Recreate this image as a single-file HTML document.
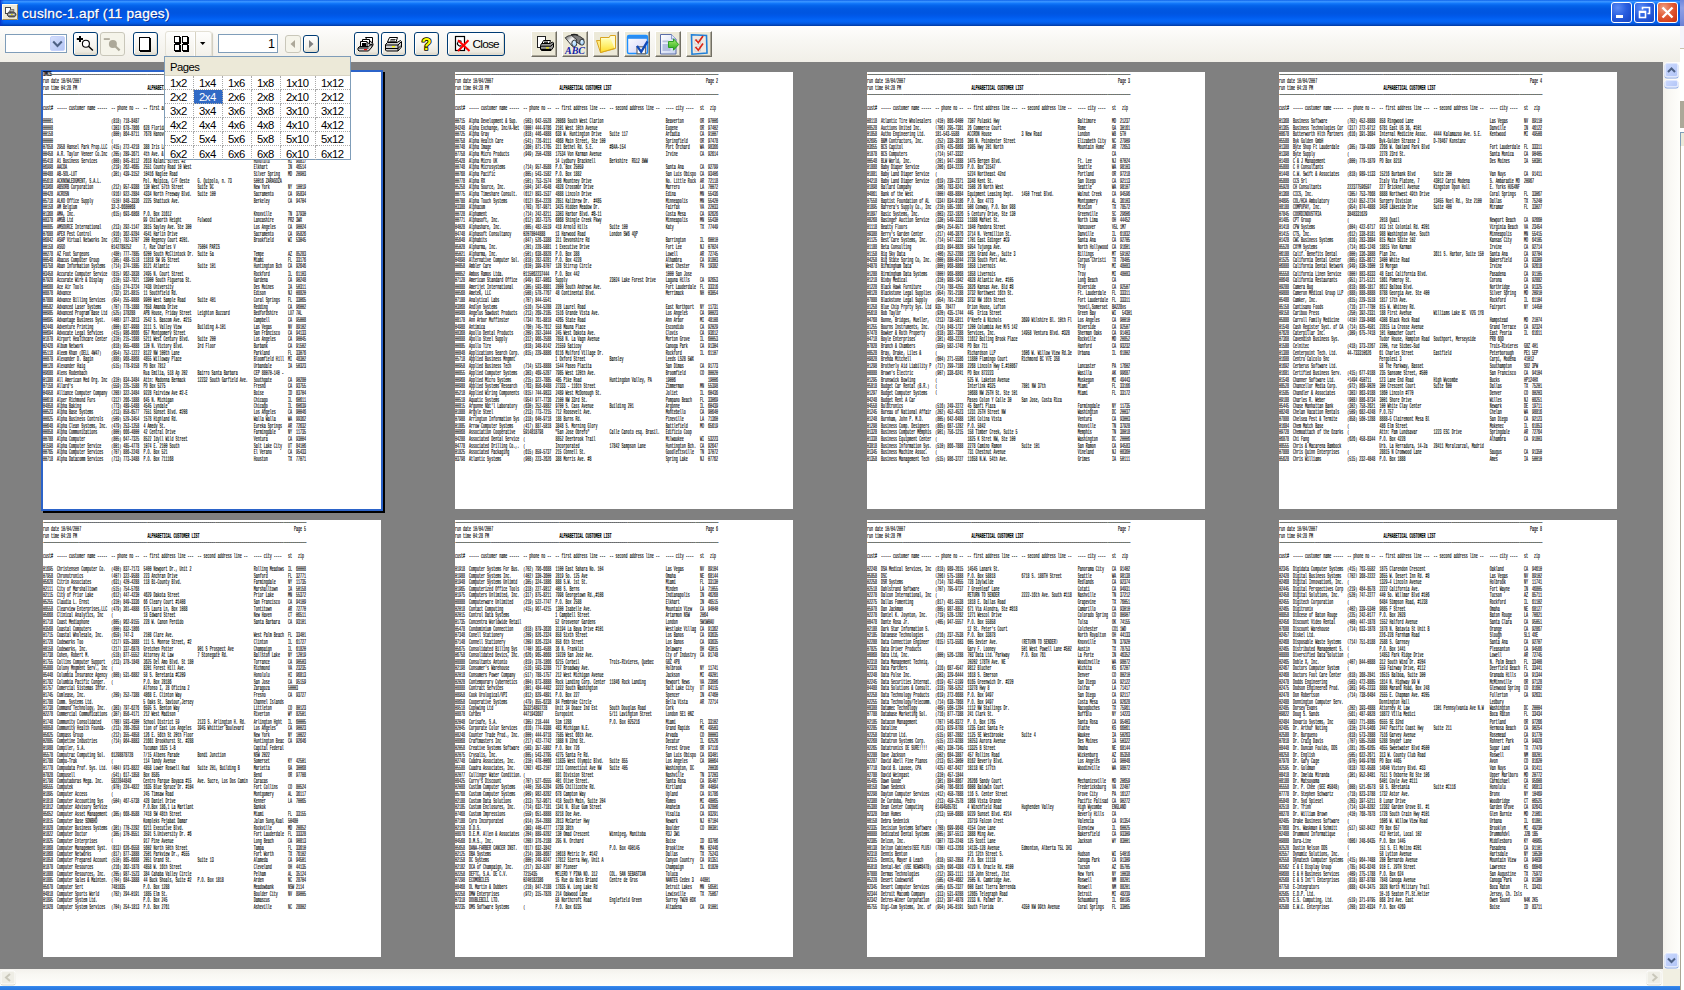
<!DOCTYPE html>
<html><head><meta charset="utf-8"><title>cuslnc-1.apf (11 pages)</title>
<style>
*{box-sizing:border-box;margin:0;padding:0}
html,body{width:1684px;height:990px;overflow:hidden;background:#fff;font-family:"Liberation Sans",sans-serif}
#win{position:absolute;left:0;top:0;width:1680px;height:990px;background:#808080;overflow:hidden}
#title{position:absolute;left:0;top:0;width:1680px;height:26px;
background:linear-gradient(to bottom,#0a5ee8 0%,#3a93ff 5%,#2a8bff 9%,#0f74f8 14%,#0463ea 22%,#0058e2 34%,#0055e0 50%,#0059ea 62%,#0364f6 76%,#0463f2 84%,#0357dd 91%,#0247bd 96%,#0138a0 100%)}
#title:before{content:"";position:absolute;left:0;top:0;width:4px;height:26px;background:linear-gradient(to right,#0a34c8 0,rgba(10,52,200,0.5) 1.5px,rgba(10,52,200,0) 4px)}
#title .ttl{position:absolute;left:22px;top:4.5px;color:#fff;font-size:13.7px;line-height:18px;letter-spacing:0.25px;-webkit-text-stroke:0.3px #fff;text-shadow:1px 1px 0 #0a2a8a;white-space:nowrap}
#tb{position:absolute;left:0;top:26px;width:1680px;height:36px;background:linear-gradient(to bottom,#fefefd 0%,#f8f7f3 40%,#f1efe8 100%)}
#work{position:absolute;left:0;top:62px;width:1663px;height:907px;background:#808080}
.page{position:absolute;width:338px;height:437px;background:#fff;overflow:hidden}
.page pre{position:absolute;left:0.3px;top:0px;font-family:"Liberation Mono",monospace;font-size:10px;line-height:10.36px;color:#000;transform-origin:0 0;transform:scale(0.3345,0.64);white-space:pre;-webkit-text-stroke:0.26px #000}
.page pre b{font-weight:bold}
.page pre i{font-style:normal;display:inline-block;transform:scaleY(0.76);transform-origin:50% 60%}
.page pre u{text-decoration:none;text-shadow:3px 0 0 #000}
.sel{box-shadow:0 0 0 2px #2b63c9,2px 2px 0 2px #000;overflow:visible}

/* toolbar controls */
.xb{position:absolute;border:1px solid #003c74;border-radius:3px;background:linear-gradient(to bottom,#ffffff 0%,#f5f4ef 55%,#eceae0 85%,#d8d3c4 100%);box-shadow:inset 1px 1px 0 #fff, inset -1px -1px 0 #e0dccf}
.xb.dis{border-color:#c9c7ba;background:#f5f4ea;box-shadow:none}
.xb svg{position:absolute;left:0;top:0}
.flat{position:absolute;border:1px solid #e4e1d6;border-radius:3px;background:linear-gradient(to bottom,#fefefd,#f3f1ea);box-shadow:1px 1px 1px #cfcbbd}
.cb{position:absolute;left:531px;top:31px;width:26px;height:26px;background:#ece9d8;border-top:1px solid #fff;border-left:1px solid #fff;border-right:1px solid #716f64;border-bottom:1px solid #716f64;box-shadow:inset -1px -1px 0 #aca899}
.cb svg{position:absolute;left:0;top:0}
#combo{position:absolute;left:5px;top:34px;width:62px;height:19px;border:1px solid #7f9db9;background:#fff}
#combo .dd{position:absolute;right:1px;top:1px;width:15px;height:15px;border-radius:2px;background:linear-gradient(135deg,#d5dffc 0%,#c3d1f8 50%,#b4c5f4 100%);border:1px solid #c5d2fb}
#pgno{position:absolute;left:218px;top:34px;width:60px;height:19px;border:1px solid #7f9db9;background:#fff;font-size:12.6px;line-height:19px;text-align:right;padding-right:2px;color:#000}
/* popup */
#pop{position:absolute;left:164px;top:56px;width:187px;height:104px;border:1px solid #7f9db9;background:#fff}
#pop .hd{position:absolute;left:0;top:0;width:185px;height:19px;background:#ece9d8;border-bottom:1px solid #d8d4c4;font-size:11.3px;letter-spacing:-0.55px;line-height:20px;padding-left:5px;color:#000;overflow:hidden}
#pop table{position:absolute;left:0;top:19px;width:185px;border-collapse:separate;border-spacing:0;table-layout:fixed;font-size:11.3px;letter-spacing:-0.45px;color:#000}
#pop td{height:14px;line-height:12px;padding:1px 0 0 5px;border-right:1px dotted #a9a9a9;border-bottom:1px dotted #a9a9a9;white-space:nowrap;overflow:hidden}
#pop td:last-child{border-right:none}
#pop tr:last-child td{border-bottom:none}
#pop td.hi{background:#316ac5;color:#fff}
/* scrollbars */
#vs{position:absolute;left:1663px;top:62px;width:17px;height:907px;background:linear-gradient(to right,#f3f1ec 0%,#f8f7f3 30%,#fefefb 100%)}
#hs{position:absolute;left:0;top:969px;width:1663px;height:17px;background:linear-gradient(to bottom,#f3f1ec 0%,#f8f7f3 30%,#fefefb 100%)}
#corner{position:absolute;left:1663px;top:969px;width:17px;height:17px;background:#f1efe2}
.sb{position:absolute;width:13px;height:14px;border-radius:2px;background:linear-gradient(135deg,#cad8fd 0%,#bccdfa 60%,#b3c6f7 100%);border:1px solid #dfe7fe;box-shadow:0 0 0 0.5px #fff,0 1px 0 0.5px #86a4e4}
.sbd{position:absolute;width:14px;height:13px;border-radius:2px;background:#eeede5;border:1px solid #f6f5f0;box-shadow:0 0 0 0.5px #fff,0 1px 0 0.5px #d8d5c8}
#bot{position:absolute;left:0;top:986px;width:1680px;height:4px;background:linear-gradient(to bottom,#3d8df0 0%,#2c7ee6 40%,#2a78e0 100%)}
#edge{position:absolute;left:1680px;top:0;width:4px;height:990px;background:#fff}
#edge div{position:absolute;left:0;width:4px}

.tbtn{position:absolute;top:2px;width:21px;height:21px;border:1px solid #fff;border-radius:3px;background:radial-gradient(circle at 30% 25%,#5b8bf5 0%,#2a5fe0 45%,#1d4fd0 75%,#1a48c0 100%)}
.tbtn svg{position:absolute;left:-1px;top:-1px}
.tbtn.cls{background:radial-gradient(circle at 30% 25%,#f0a083 0%,#e2603a 40%,#d6421e 75%,#bf3312 100%)}
.q{position:absolute;left:6px;top:2px;font-size:17px;font-weight:bold;line-height:18px;color:#ff0;-webkit-text-stroke:1.1px #000;paint-order:stroke fill}
.cl{position:absolute;left:24.5px;top:4.6px;font-size:11.8px;line-height:13px;color:#000;letter-spacing:-0.75px}
</style></head><body>
<div id="win">
<div id="work"></div>
<div class="page sel" style="left:43px;top:72px"><pre><u>DMCS-------------------------------------------------------------------------------------------------------------------------------</u>
run date 10/04/2007
run time 04:28 PM                                   <b>ALPHABETICAL CUSTOMER LIST</b>
<u>-----------------------------------------------------------------------------------------------------------------------------------</u>

cust#  ----- customer name -----  -- phone no --  -- first address line ---  -- second address line --   ---- city ----   st   zip

00001                             <i>(</i>818<i>)</i> 718-8487
00008                             <i>(</i>303<i>)</i> 678-7866  628 Florida Avenue                                     Longmont         CO  80501
00158                             <i>(</i>800<i>)</i> 864-8711  7678 Hanover Parkway                                   Greenbelt        MD  20770
00000                             <i>(</i>
07658  2958 Hansel Park Prop.LLC  <i>(</i>415<i>)</i> 272-4218  388 Iris Lane                                          Mill Valley      CA  94941
00458  A.R. Taylor Veneer Co.Inc  <i>(</i>205<i>)</i> 289-3671  4th Ave. &amp; 2nd Street                                  Demopolis        AL  36732
05418  A1 Business Services       <i>(</i>808<i>)</i> 845-8112  2618 Kalani Street #2                                  Honolulu         HI  96817
06998  AACOA                      <i>(</i>219<i>)</i> 262-4685  2551 County Road 10 West                               Elkhart          IN  46514
00488  AB-SOL-LUT                 <i>(</i>301<i>)</i> 439-3152  10416 Naglee Road                                      Silver Spring    MD  20903
05618  ACKNOWLEDGMENT, S.A.L.                     Pol. Malpica, C/F Oeste    G. Quipolo, n. 73           50016 ZARAGOZA
03968  ABSORB Corporation         <i>(</i>212<i>)</i> 957-9388  130 West 57th Street       Suite 9C                    New York         NY  10019
00428  ACROSN                     <i>(</i>916<i>)</i> 922-2884  4334 North Freeway Blvd.   Suite 100                   Sacramento       CA  95834
05718  ALKO Office Supply         <i>(</i>510<i>)</i> 848-3336  2225 Shattuck Ave.                                     Berkeley         CA  94704
00158  AM Belgium                 32-2-6680068
01368  AMA, Inc.                  <i>(</i>615<i>)</i> 693-6868  P.O. Box 31612                                         Knoxville        TN  37930
08378  AMSB Ltd                                   99 Chilworth Height        Fulwood                     Lancashire       PR2 3WX
00885  AMSOURCE International     <i>(</i>213<i>)</i> 292-1147  3815 Sayley Ave. Ste 300                               Los Angeles      CA  90024
07688  APEX Pest Control          <i>(</i>916<i>)</i> 362-9284  4541 Harlin Drive                                      Sacramento       CA  95826
06842  ASAP Virtual Networks Inc  <i>(</i>262<i>)</i> 782-3707  200 Regency Court #201.                                Brookfield       WI  53045
00158  ASGO                       0142789252      7, Rue Charles V           75004 PARIS
00278  AZ Foot Surgeons           <i>(</i>480<i>)</i> 777-7885  6200 South McClintock Dr.  Suite 5a                    Tempe            AZ  85283
00548  Abacus Computer Group      <i>(</i>305<i>)</i> 488-1518  11818 SW 95 Street                                     Miami            FL  33176
03758  Aban Information Systems   <i>(</i>714<i>)</i> 374-1885  8121 Atlantic              Suite 101                   Huntington Bch   CA  92646
03458  Accurate Computer Service  <i>(</i>815<i>)</i> 962-3838  2495 N. Court Street                                   Rockford         IL  61103
07928  Accurate Wire &amp; Display    <i>(</i>310<i>)</i> 532-7821  13900 South Figueroa St.                               Gardena          CA  90248
00688  Ace Air Tools              <i>(</i>515<i>)</i> 274-3724  7438 University                                        Des Moines       IA  50311
08878  Advance                    <i>(</i>732<i>)</i> 321-8815  11 Southfield Rd.                                      Edison           NJ  08820
07888  Advance Billing Services   <i>(</i>954<i>)</i> 255-9888  9900 West Sample Road      Suite 401                   Coral Springs    FL  33065
00582  Advanced Laser Systems     <i>(</i>707<i>)</i> 778-1888  7658 Amanda Drive                                      Redding          CA  96002
00985  Advanced Program Base Ltd  <i>(</i>525<i>)</i> 378288    APB House, Friday Street   Leighton Buzzard            Bedfordshire     LU7 7AL
00695  Advantage Business Syst.   <i>(</i>408<i>)</i> 377-3813  2542 S. Bascom Ave. #215                               Campbell         CA  95008
02448  Adventure Printing         <i>(</i>800<i>)</i> 827-9988  3111 S. Valley View        Building A-101              Las Vegas        NV  89102
00694  Advocate Legal Services    <i>(</i>415<i>)</i> 986-8666  657 Montgomery Street                                  San Francisco    CA  94133
01878  Airport Healthcare Center  <i>(</i>310<i>)</i> 215-1688  5211 West Century Blvd.    Suite 200                   Los Angeles      CA  90045
02428  Album Network              <i>(</i>818<i>)</i> 955-4888  120 N. Victory Blvd.       3rd Floor                   Burbank          CA  91502
05118  Aleem Khan <i>(</i>DELL 4W47<i>)</i>     <i>(</i>954<i>)</i> 752-1222  8122 NW 100th Lane                                     Parkland         FL  33076
00878  Alexander D. Bagin         <i>(</i>888<i>)</i> 968-8868  4855 Willoway Place                                    Bloomfield Hill  MI  48302
00128  Alexander Haig             <i>(</i>515<i>)</i> 778-9158  PO Box 7812                                            Urbandale        IA  50323
09688  Alens Rodenbach                            Rua Emilia, 518 Ap 202     Bairro Santa Barbara        CEP 88070-140 -
01388  All American Med Org. Inc  <i>(</i>310<i>)</i> 834-3484  Attn: Madonna Bermack      12232 South Garfield Ave.   Southgate        CA  90280
07158  Allard&#x27;s                   <i>(</i>559<i>)</i> 225-1588  PO Box 5275                                            Fresno           CA  93755
04958  Alliance Computer Company  <i>(</i>208<i>)</i> 322-3484  9228 Fairview Ave #2-E                                 Boise            ID  83704
00618  Alper Richmond Furs        <i>(</i>312<i>)</i> 266-1888  645 N. Michigan                                        Chicago          IL  60611
04858  Alpha Baking               <i>(</i>773<i>)</i> 489-5488  4545 Lyndale                                           Chicago          IL  60639
00523  Alpha Base Systems         <i>(</i>213<i>)</i> 858-6577  7551 Sunset Blvd. #208                                 Los Angeles      CA  90046
00825  Alpha Business Controls    <i>(</i>509<i>)</i> 529-3454  1578 Highland Rd.                                      Walla Walla      WA  99362
00648  Alpha Clean Systems, Inc.  <i>(</i>479<i>)</i> 253-1258  4 Amedy St.                                            Eureka Springs   AR  72632
00858  Alpha Communications       <i>(</i>800<i>)</i> 666-4800  42 Central Drive                                       Farmingdale      NY  11735
00788  Alpha Computer             <i>(</i>805<i>)</i> 647-7325  8522 Idyll Wild Street                                 Ventura          CA  93004
01598  Alpha Computer Service     <i>(</i>801<i>)</i> 485-4778  1074 E. 2100 South                                     Salt Lake City   UT  84106
00765  Alpha Computer Services    <i>(</i>707<i>)</i> 886-2248  P.O. Box 521                                           El Verano        CA  95433
00718  Alpha Datacomm Services    <i>(</i>713<i>)</i> 773-3488  P.O. Box 711168                                        Houston          TX  77071</pre></div>
<div class="page" style="left:455px;top:72px"><pre><u>-----------------------------------------------------------------------------------------------------------------------------------</u>
run date 10/04/2007                                                                                                          Page 2
run time 04:28 PM                                   <b>ALPHABETICAL CUSTOMER LIST</b>
<u>-----------------------------------------------------------------------------------------------------------------------------------</u>

cust#  ----- customer name -----  -- phone no --  -- first address line ---  -- second address line --   ---- city ----   st   zip

00715  Alpha Development &amp; Sup.   <i>(</i>503<i>)</i> 642-5528  20868 South West Clarion                               Beaverton        OR  97006
04248  Alpha Exchange, Inc/A-Net  <i>(</i>800<i>)</i> 444-9786  2101 West 10th Avenue                                  Eugene           OR  97402
00725  Alpha Gray                 <i>(</i>818<i>)</i> 446-4888  638 W. Huntington Drive    Suite 117                   Arcadia          CA  91007
00758  Alpha Health Care          <i>(</i>541<i>)</i> 726-9111  4868 Main Street, Ste 100                              Springfield      OR  97478
00748  Alpha Image                <i>(</i>360<i>)</i> 871-1765  311 Bethel Rd. S.E.        #B4A-154                    Port Orchard     WA  98366
07758  Alpha Micro Products       <i>(</i>949<i>)</i> 250-4288  17534 Von Karman Avenue                                Irvine           CA  92614
05428  Alpha Micro UK                             14 Lydbury Bracknell       Berkshire  RG12 8WW
00748  Alpha Microsystems         <i>(</i>714<i>)</i> 957-8588  P.O. Box 25059                                         Santa Ana        CA  92799
00768  Alpha Pacific              <i>(</i>805<i>)</i> 543-1582  P.O. Box 1882                                          San Luis Obispo  CA  93406
00778  Alpha RX                   <i>(</i>501<i>)</i> 753-1574  108 Mountney Drive                                     No. Little Rock  AR  72118
05258  Alpha Source, Inc.         <i>(</i>504<i>)</i> 347-4548  4828 Crossmor Drive                                    Marrero          LA  70072
00775  Alpha Timeshare Consult.   <i>(</i>612<i>)</i> 893-1537  4888 Lincoln Drive                                     Edina            MN  55436
00788  Alpha Touch Systems        <i>(</i>612<i>)</i> 854-2228  2851 Kalibrew Dr.  #485                                Minneapolis      MN  55420
03388  Alphacom                   <i>(</i>703<i>)</i> 767-9871  3425 Hidden Meadow Dr.                                 Fairfax          VA  22033
00728  Alphament                  <i>(</i>714<i>)</i> 242-8211  3303 Harbor Blvd. #B-11                                Costa Mesa       CA  92626
00771  Alphasoft, Inc.            <i>(</i>612<i>)</i> 362-7375  6868 Shingle Creek Pkwy                                Minneapolis      MN  55430
04028  Alphashare, Inc.           <i>(</i>805<i>)</i> 482-5519  418 Arnold Hills           Suite 100                   Katy             TX  77449
04748  Alphasoft Consultancy      02078044888     13 Harwood Road            London SW6 4QP
05648  Alphabits                  <i>(</i>847<i>)</i> 526-3388  311 Devonshire Rd                                      Barrington       IL  60010
05028  Alpharma, Inc.             <i>(</i>201<i>)</i> 228-5881  1 Executive Drive                                      Fort Lee         NJ  07024
05021  Alpharma, Inc.             <i>(</i>501<i>)</i> 638-8828  P.O. Box 388                                           Lowell           AR  72745
04898  Alternative Computer Sol.  <i>(</i>818<i>)</i> 282-9281  P.O. Box 4228                                          Alhambra         CA  91803
00858  Ambler Care                <i>(</i>610<i>)</i> 399-8707  128 Stirrup Circle                                     West Chester     PA  19382
00852  Ambos Ramos Ltda.          0115062237444   P.O. Box 442                                           1000 San Jose
07128  American Standard Office   <i>(</i>949<i>)</i> 837-9863  Supply                     23024 Lake Forest Drive     Laguna Hills     CA  92653
00888  Amerijet International     <i>(</i>305<i>)</i> 593-8881  2800 South Andrews Ave.                                Fort Lauderdale  FL  33316
00568  Ametek, LLC                <i>(</i>508<i>)</i> 578-7767  48 Continental Blvd.                                   Merrimack        NH  03054
07188  Analytical Labs            <i>(</i>707<i>)</i> 844-5541
03868  Andlyn Systems             <i>(</i>516<i>)</i> 754-5288  228 Laurel Road                                        East Northport   NY  11731
00988  Angelus Sawdust Products   <i>(</i>213<i>)</i> 269-2185  1516 Grande Vista Ave.                                 Los Angeles      CA  90023
08178  Ann Arbor Muffinster       <i>(</i>734<i>)</i> 761-8818  4265 State Road                                        Ann Arbor        MI  48108
04988  Antimica                   <i>(</i>760<i>)</i> 745-7612  558 Mauna Place                                        Escondido        CA  92029
08368  Apollo Dental Products     <i>(</i>209<i>)</i> 292-3444  245 West Dakota Ave.                                   Clovis           CA  93612
00888  Apollo Steel Supply        <i>(</i>312<i>)</i> 966-2588  7858 N. La Vagn Avenue                                 Morton Grove     IL  60053
00885  Apollo Tire                <i>(</i>818<i>)</i> 348-9142  21559 Saticoy                                          Canoga Park      CA  91304
00848  Applications Search Corp.  <i>(</i>815<i>)</i> 229-8886  6116 Mulford Village Dr.                               Rockford         IL  61107
05718  Applied Business Mngmnt                    1 Oxford Street            Bansley                     Leeds LS28 5WX
00958  Applied Business Tech      <i>(</i>714<i>)</i> 523-8888  1544 Paseo Placita                                     San Dimas        CA  91773
00855  Applied Computer Systems   <i>(</i>303<i>)</i> 469-5287  7985 West 120th Ave.                                   Broomfield       CO  80020
00968  Applied Micro Systems      <i>(</i>215<i>)</i> 322-7885  485 Pike Road              Huntingdon Valley, PA       19006                19006
00988  Applied Systems Research   <i>(</i>763<i>)</i> 856-6488  27333 - 116th Street                                   Zimmerman        MN  55398
05218  Applied Wiring Components  <i>(</i>815<i>)</i> 744-9833  2489 West McDonough St.                                Joliet           IL  60436
00518  Aquatic Systems            <i>(</i>954<i>)</i> 977-7736  2100 NW 33rd St.                                       Pompano Beach    FL  33069
00815  Argonne Nat&#x27;l Laboratory   <i>(</i>630<i>)</i> 252-9882  9700 S. Cass Avenue        Building 201                Argonne          IL  60439
01888  Argyle Steel               <i>(</i>213<i>)</i> 773-7215  712 Roosevelt Ave.                                     Montebello       CA  90640
07988  Arrington Information Sys  <i>(</i>318<i>)</i> 640-9718  188 Burns Rd.                                          Pineville        LA  71360
01885  Arrow Computer Systems     <i>(</i>417<i>)</i> 887-5818  3848 S. Morning Glory                                  Battlefield      MO  65619
00868  Association Cooperative    5914818798      &quot;San Jose Obrero&quot;          Calle Canoto esq. Brasil.   Edificio Coop
04288  Associated Dental Service  <i>(</i>               8852 Deerbrook Trail                                   Milwaukee        WI  53223
04778  Associated Drilling Co.,.  <i>(</i>               Incorporated               17842 Sampson Lane          Huntington Bch.  CA  92647
01825  Associated Packaging       <i>(</i>615<i>)</i> 859-5737  215 Connell St.                                        Goodlettsville   TN  37072
03798  Atlantic Systems           <i>(</i>908<i>)</i> 223-2626  388 Morris Ave. #8                                     Spring Lake      NJ  07762</pre></div>
<div class="page" style="left:867px;top:72px"><pre><u>-----------------------------------------------------------------------------------------------------------------------------------</u>
run date 10/04/2007                                                                                                          Page 3
run time 04:28 PM                                   <b>ALPHABETICAL CUSTOMER LIST</b>
<u>-----------------------------------------------------------------------------------------------------------------------------------</u>

cust#  ----- customer name -----  -- phone no --  -- first address line ---  -- second address line --   ---- city ----   st   zip

08118  Atlantic Tire Wholesalers  <i>(</i>410<i>)</i> 866-6400  7307 Pulaski Hwy                                       Baltimore        MD  21237
08528  Auctions United Inc.       <i>(</i>706<i>)</i> 295-7381  26 Commerce Court                                      Rome             GA  30161
01858  Autho Engineering Ltd.     181-543-5588    ACCRON House               3 New Road                  London           W8  5TH
02695  B&amp;M Contractors, Inc.      <i>(</i>252<i>)</i> 338-3816  308 N. Poindexter Street                               Elizabeth City   NC  27909
03655  BCS Capitol                <i>(</i>870<i>)</i> 425-6868  1985 Hwy 201 North                                     Mountain Home    AR  72653
01878  BCS Computers              <i>(</i>714<i>)</i> 547-3332                                                                          CA
00548  BLW World, Inc.            <i>(</i>201<i>)</i> 947-1888  1475 Bergen Blvd.                                      Ft. Lee          NJ  07024
01888  Baby Diaper Service        <i>(</i>206<i>)</i> 634-2229  P.O. Box 31547                                         Seattle          WA  98103
01881  Baby Land Diaper Service   <i>(</i>               5224 Northeast 42nd                                    Portland         OR  97218
04218  Baby Land Diaper Service   <i>(</i>619<i>)</i> 239-2371  3348 Kent St.                                          San Diego        CA  92113
01898  Ballard Company            <i>(</i>206<i>)</i> 783-8241  1508 26 North West                                     Seattle          WA  98107
04861  Bank of the West           <i>(</i>800<i>)</i> 488-8884  Equipment Leasing Dept.    1450 Treat Blvd.            Walnut Creek     CA  94596
07558  Baptist Foundation of AL   <i>(</i>334<i>)</i> 834-9186  P.O. Box 4773                                          Montgomery       AL  36103
01895  Barrera&#x27;s Supply Co., Inc  <i>(</i>210<i>)</i> 585-1661  508 Conway, P.O. Box 988                               Mission          TX  78572
01897  Basic Systems, Inc.        <i>(</i>803<i>)</i> 232-1826  5 Century Drive, Ste 130                               Greenville       SC  29606
08268  Basinger Auction Service   <i>(</i>330<i>)</i> 549-3333  11888 Market St.                                       North Lima       OH  44452
01118  Beatty Floors              <i>(</i>604<i>)</i> 254-9571  1840 Pandora Street                                    Vancouver        V5L 1M7
09388  Berry&#x27;s Garden Center      <i>(</i>217<i>)</i> 446-3876  3714 N. Vermillion St.                                 Danville         IL  61832
01125  Best Care Systems, Inc.    <i>(</i>714<i>)</i> 547-3332  1701 East Edinger #C9                                  Santa Ana        CA  92705
01188  Beta Consulting            <i>(</i>818<i>)</i> 894-8828  5954 Tujunga Ave.                                      North Hollywood  CA  91601
01158  Big Sky Data               <i>(</i>406<i>)</i> 252-2288  1201 Grand Ave., Suite 3                               Billings         MT  59102
04258  Big State Spring Co, Inc.  <i>(</i>800<i>)</i> 880-0244  2738 South Port Ave.                                   Corpus Christi   TX  78405
04878  Birmingham Data            <i>(</i>800<i>)</i> 968-8868  1858 Livernois                                         Troy             MI  48083
01288  Birmingham Data Systems    <i>(</i>800<i>)</i> 968-8868  1858 Livernois                                         Troy             MI  48083
01218  Bixby Medical              <i>(</i>310<i>)</i> 988-1942  4828 Atlantic Ave. #105                                Long Beach       CA
01228  Black Hawk Furniture       <i>(</i>714<i>)</i> 788-4255  3826 Kansas Ave. Bld #8                                Riverside        CA  92507
08128  Blackstone Legal Supplies  <i>(</i>954<i>)</i> 791-2188  3732 Northwest 16th St.                                Ft. Lauderdale   FL  33311
07888  Blackstone Legal Supply    <i>(</i>954<i>)</i> 791-2188  3732 NW 16th Street                                    Fort Lauderdale  FL  33311
01258  Blue Chip Prprty Sys. Ltd  935  78477      Orion House, Lufton                                    Yeovil,Somerset  BA228xs
05618  Bob Taylor                 <i>(</i>920<i>)</i> 435-1744  445  Erica Street                                      Green Bay        WI   54301
04768  Bonne, Bridges, Mueller,   <i>(</i>213<i>)</i> 738-5811  O&#x27;Keefe &amp; Nichols          3699 Wilshire Bl. 10th Fl   Los Angeles      CA  90010
01255  Bourns Instruments, Inc.   <i>(</i>714<i>)</i> 848-1737  1200 Columbia Ave M/S 142                              Riverside        CA  92507
07478  Bowker &amp; Roth Property     <i>(</i>818<i>)</i> 382-7388  Services, Inc.             14958 Ventura Blvd. #328    Sherman Oaks     CA  91403
04718  Boyle Enterprises          <i>(</i>301<i>)</i> 468-2228  11612 Boiling Brook Place                              Rockville        MD  20852
07828  Branch &amp; Chambers          <i>(</i>559<i>)</i> 582-1748  PO Box 711                                             Hanford          CA  93232
08528  Bray, Drake, Liles &amp;       <i>(</i>               Richardson LLP             1606 W. Willow View Rd.3e   Urbana           IL  61802
09828  Brenda Mitchell            <i>(</i>604<i>)</i> 271-5586  11880 Flamingo Court       Richmond BC V7E 3S8
01298  Brotherly Aid Liability P  <i>(</i>717<i>)</i> 299-7188  2268 Lincoln Hwy E.#10867                              Lancaster        PA  17602
08888  Brown&#x27;s Electric           <i>(</i>907<i>)</i> 338-6241  PO Box 872223                                          Wasilla          AK  99687
01295  Brunswick Bowling          <i>(</i>               525 W. Laketon Avenue                                  Muskegon         MI  49443
05818  Budget Car Rental <i>(</i>B.R.<i>)</i>   <i>(</i>               Interlink #325             7801 NW 37th                Miami            FL  33166
01297  Budget Computer Systems    <i>(</i>               10688 NW 25TH St. Ste 101                              Miami            FL  33172
04248  Budget Rent A Car                          Paseo Colon Y Calle 30     San Jose, Costa Rica
04558  Bulbtronics                <i>(</i>516<i>)</i> 249-2272  45 Banfi Plaza                                         Farmingdale      NY  11735
01245  Bureau of National Affair  <i>(</i>202<i>)</i> 452-4523  1231 25TH Street NW                                    Washington       DC  20037
01248  Burnham, John P. M.D.      <i>(</i>805<i>)</i> 642-6488  1201 Colina Vista                                      Ventura          CA  93003
01298  Business Comp. Designers   <i>(</i>865<i>)</i> 687-1282  P.O. 5842                                              Knoxville        TN  37928
01328  Business Computer Memphis  <i>(</i>901<i>)</i> 756-1215  158 Timber Creek, Suite 5                              Memphis          TN  38018
01338  Business Equipment Center  <i>(</i>               1825 K Stret NW, Ste 100                               Washington       DC  20006
03818  Business Information Sys.  <i>(</i>510<i>)</i> 866-7888  2278 Camino Ramon          Suite 101                   San Ramon        CA  94583
01345  Business Machine Assoc.    <i>(</i>               731 Chestnut Avenue                                    Vineland         NJ  08360
01358  Business Management Tech   <i>(</i>515<i>)</i> 986-3727  11658 N.W. 54th Ave.                                   Grimes           IA  50111</pre></div>
<div class="page" style="left:1279px;top:72px"><pre><u>-----------------------------------------------------------------------------------------------------------------------------------</u>
run date 10/04/2007                                                                                                          Page 4
run time 04:28 PM                                   <b>ALPHABETICAL CUSTOMER LIST</b>
<u>-----------------------------------------------------------------------------------------------------------------------------------</u>

cust#  ----- customer name -----  -- phone no --  -- first address line ---  -- second address line --   ---- city ----   st   zip

01368  Business Software          <i>(</i>702<i>)</i> 452-8888  858 Ringwood Lane                                      Las Vegas        NV  89110
01365  Business Technologies Cor  <i>(</i>317<i>)</i> 272-9712  6781 East US 36, #101                                  Danville         IN  46122
08678  Butterworth Hlth Partners  <i>(</i>616<i>)</i> 391-3684  Internal Medicine Assoc.   4444 Kalamazoo Ave. S.E.    Kentwood         MI  49508
05588  Byk Gulden GmbH                            Byk-Gulden Strasse 2       D-78467 Konstanz
01388  Byte Shop Ft Lauderdale    <i>(</i>305<i>)</i> 739-9369  2268 W. Oakland Park Blvd                              Fort Lauderdale  FL  33311
01398  Byte Supply                <i>(</i>               2278 23rd St.                                          Santa Monica     CA  90405
01488  C &amp; J Management           <i>(</i>800<i>)</i> 779-1879  PO Box 8218                                            Des Moines       IA  50301
05888  C H Consultants
01448  C.W. Swift &amp; Associates    <i>(</i>818<i>)</i> 989-1133  15216 Burbank Blvd         Suite 300                   Van Nuys         CA  91411
05888  CCS Srl                                    Italy Via Platone, 7       43012 Carpi Modena          S. Ambaradie MO  20967
05928  CH Consultants             222377596597    227 Bricknell Avenue       Kingston Upon Hull          E. Yorks HU54NF
01368  CICS, Inc.                 <i>(</i>305<i>)</i> 753-7668  8888 Northwest 49th Drive                              Coral Springs    FL  33067
04895  COL/HCA Ambulatory         <i>(</i>214<i>)</i> 852-2724  Surgery Division           13455 Noel Rd., Ste 2100    Dallas           TX  75240
08188  COMPUPAY, Inc.             <i>(</i>954<i>)</i> 874-4888  3450 Lakeside Drive        Suite 400                   Miramar          FL  33027
07845  COORDINDUSTRIA             3848331629
01485  CPT Group                  <i>(</i>               2018 Quail                                             Newport Beach    CA  92660
01418  CPW Systems                <i>(</i>804<i>)</i> 422-6717  913 1st Colonial Rd. #201                              Virginia Beach   VA  23454
01415  CTS, Inc.                  <i>(</i>612<i>)</i> 338-8181  988 Washington Ave. South                              Minneapolis      MN  55415
01428  CWC Business Systems       <i>(</i>816<i>)</i> 283-3684  815 Main Suite 102                                     Kansas City      MO  64105
05528  CXYM Systems               <i>(</i>714<i>)</i> 863-1248  18815 Von Karman                                       Irvine           CA  92714
06188  Calif. Benefits Dental     <i>(</i>800<i>)</i> 336-3888  Plan Inc.                  3611 S. Harbor, Suite 150   Santa Ana        CA  92704
01525  California Dental Center   <i>(</i>805<i>)</i> 835-8672  3400 White Road                                        Bakersfield      CA  93309
06888  California Dental Network  <i>(</i>949<i>)</i> 830-1600  18 Morgan                                              Irvine           CA  92618
05558  California Linen Service   <i>(</i>800<i>)</i> 883-8333  48 East California Blvd.                               Pasadena         CA  91105
08648  California Restaurants     <i>(</i>951<i>)</i> 371-5121  1861 Pomeroy St.                                       Corona           CA  92882
09288  Camera Bug                 <i>(</i>818<i>)</i> 886-1817  8612 Balboa Blvd.                                      Northridge       CA  91325
09888  Cameron Medical Group LLP  <i>(</i>888<i>)</i> 888-8888  8788 Georgia Ave. Ste 400                              Silver Spring    MD  20910
05488  Camker, Inc.               <i>(</i>815<i>)</i> 229-1518  1817 17th Ave.                                         Rockford         IL  61104
05158  Cantisano Foods            <i>(</i>716<i>)</i> 377-7780  815 W. Whitney Rd.                                     Fairport         NY  14450
09158  Cariboo Press              <i>(</i>250<i>)</i> 392-2331  188 First Avenue           Williams Lake BC  V2G 1Y8
05888  Carroll Family Medicine    <i>(</i>410<i>)</i> 239-8486  4308 Black Rock Road                                   Hampstead        MD  21074
01548  Cash Register Syst. of CA  <i>(</i>714<i>)</i> 825-4581  22815 La Crosse Avenue                                 Grand Terrace    CA  92324
07628  Caterpillar Inc.           <i>(</i>309<i>)</i> 675-7418  101 Hamacher Court                                     East Peoria      IL  61611
07368  Cavendish Business Sys.                    Tudor House, Hampton Road  Southport, Merseyside       PR8 6QD
01588  Celnitec                   <i>(</i>418<i>)</i> 373-2267  2200, rue Sicbec-Sud                                   Trois-Rivieres   G8Z 4H1
01388  Centerpoint Tech. Ltd.     44-733310626    61 Charles Street          Eastfield                   Peterborough     PE1 5EP
01688  Centro Calcolo Snc                         Pergolesi 3                                            Carpi, Modena    41012
01692  Cerberus Software Ltd.                     58 The Parkway, Basset                                 Southampton      SO2 3PW
01681  Certified Business Serv.   <i>(</i>415<i>)</i> 677-9188  235 Sansome Street, #500                               San Francisco    CA  94104
01548  Channer Software Ltd.      +1494 450711    123 Lane End Road          High Wycombe                Bucks            HP124HX
08528  Chancellor Media Corp.     <i>(</i>972<i>)</i> 869-9020  300 Crescent Court         Suite 600                   Dallas           TX  75201
01585  Chandler &amp; Associates      <i>(</i>303<i>)</i> 863-9188  1860 Lincoln #770                                      Denver           CO  80203
09188  Charles R. Weber           <i>(</i>908<i>)</i> 886-8734  3001 Shore Drive                                       Willes           NJ  08251
05445  Chase Manhattan Bank       <i>(</i>302<i>)</i> 758-2621  100 White Clay Center                                  Newark           DE  19711
08248  Chelan Vacation Rentals    <i>(</i>509<i>)</i> 682-4248  P.O.757                                                Chelan           WA  98816
07888  Chelsea Pest &amp; Termite     <i>(</i>858<i>)</i> 560-1288  8888-G Clairemont Mesa Bl                              San Diego        CA  92123
01684  Chem Match Base            <i>(</i>               486 Elm Street                                         Mokenec          IL  61853
09728  Chemoattach of the Ozarks  <i>(</i>               Attn: Pam Lundsavar        1223 ESC Drive              Springdale       AR  72764
06878  Chi Fang                   <i>(</i>626<i>)</i> 458-8344  P.O. Box 4228                                          Alhambra         CA  91803
08555  Chris &amp; Macarena Bambock                   Urb. La Herradura, 14-2a   28411 Moralzarzal, Madrid
07888  Chris Quinn Enterprises    <i>(</i>               28815 N Cromwood Lane                                  Saugus           CA  91350
05628  Chris Williams             <i>(</i>515<i>)</i> 232-4848  P.O. Box 1888                                          Ames             IA  50010</pre></div>
<div class="page" style="left:43px;top:520px"><pre><u>-----------------------------------------------------------------------------------------------------------------------------------</u>
run date 10/04/2007                                                                                                          Page 5
run time 04:28 PM                                   <b>ALPHABETICAL CUSTOMER LIST</b>
<u>-----------------------------------------------------------------------------------------------------------------------------------</u>

cust#  ----- customer name -----  -- phone no --  -- first address line ---  -- second address line --   ---- city ----   st   zip

01695  Christensen Computer Co.   <i>(</i>480<i>)</i> 837-7173  5400 Newport Dr., Unit 2                               Rolling Meadows  IL  60008
07958  Chronotronics              <i>(</i>407<i>)</i> 322-9588  223 Anchran Drive                                      Sanford          FL  32771
05628  Citrin Associates          <i>(</i>631<i>)</i> 420-4288  118 Bi-County Blvd.                                    Farmingdale      NY  11735
02111  City of Marshalltown       <i>(</i>515<i>)</i> 754-5768                                                         Marshalltown     IA  50158
02115  City of Prior Lake         <i>(</i>612<i>)</i> 447-4230  4629 Dakota Street                                     Prior Lake       MN  55372
05255  Claudia L. Ernst           <i>(</i>310<i>)</i> 849-3336  66 Cleary Court #1408                                  San Francisco    CA  94109
08558  Clearview Enterprises,LLC  <i>(</i>479<i>)</i> 361-4888  675 Laura Ln, Box 1088                                 Tontitown        AR  72770
05668  Clinical Analytics, Inc    <i>(</i>               18 Edward Street                                       New Haven        CT  06511
01718  Coast Mediaphone           <i>(</i>805<i>)</i> 962-9155  228 W. Canon Perdido                                   Santa Barbara    CA  93101
03568  Coastal Computers          <i>(</i>800<i>)</i> 832-1866
01715  Coastal Wholesale, Inc.    <i>(</i>659<i>)</i> 747-3     2108 Clare Ave.                                        West Palm Beach  FL  33401
01728  Codeworks Too              <i>(</i>217<i>)</i> 935-3888  111 S. Monroe Street, #2                               Clinton          IL  61727
08158  Codeworks, Inc.            <i>(</i>217<i>)</i> 337-6878  Gretchen Potter            901 S Prospect Ave          Champaign        IL  61820
01738  Cohen, Robert M.           <i>(</i>518<i>)</i> 877-5552  Attorney At Law            7 Stonegate Rd.             Ballston Lake    NY  12019
01755  Collins Computer Support   <i>(</i>213<i>)</i> 378-1848  3625 Del Amo Blvd. St 180                              Torrance         CA  90503
05888  Colony Mngment Serv., Inc  <i>(</i>               8201 Forest Hill Ave.                                  Richmond         VA  23235
05448  Columbia Insurance Agency  <i>(</i>808<i>)</i> 531-6882  58 S. Beretania #C209                                  Honolulu         HI  96813
01782  Columbia Pacific Conger.   <i>(</i>               P.O. Box 28186                                         San Jose         CA  95159
01757  Comercial Sistemas Infor.                  Alfonso I, 28 Oficina 2                                Zaragoza         50003
01745  Comlease, Inc.             <i>(</i>209<i>)</i> 252-7388  4868 E. Clinton Way                                    Fresno           CA  93727
01788  Comm. Systems Ltd.                         5 Oaks St. Saviour,Jersey                              Channel Islands
01738  Command Technology, Inc.   <i>(</i>303<i>)</i> 797-6276  6595 S. Benton Way                                     Littleton        CO  80123
02278  Commercial Communications  <i>(</i>307<i>)</i> 856-4171  212 West Madison                                       Riverton         WY  82501
01748  Community Consolidated     <i>(</i>708<i>)</i> 593-4300  School District 59         2123 S. Arlington H. Rd.    Arlington Hght   IL  60005
08858  Community Health Founda-   <i>(</i>213<i>)</i> 266-2658  tion of East Los Angeles   3945 Whittier Boulevard     Los Angeles      CA  90023
05625  Compass Group              <i>(</i>212<i>)</i> 355-4858  126 E. 56th St 20th Floor                              New York         NY  10022
02885  Competine Industries       <i>(</i>714<i>)</i> 964-8883  21661 Brookhurst St. #288                              Huntington Beac  CA  92646
01988  Compiler, S.A.                             Tucuman 1625 1-B                                       Capital Federal
05578  Computrac Computing Sol.   61298878728     7/15 Albens Parade         Bondi Junction              NSW 2022
01788  Compu-Trak                 <i>(</i>               114 Tandy Avenue                                       Somerset         KY  42501
01778  Compudata Prof. Sys. Ltd.  <i>(</i>404<i>)</i> 973-8822  4858 Lower Roswell Road    Suite 201, Building B       Marietta         GA  30068
07828  Compusell                  <i>(</i>541<i>)</i> 617-1858  Box 8585                                               Bend             OR  97708
01798  Computadoras Mega. Inc.    5822844848      Centro Parque Boyaca #15   Ave. Sucre, Los Dos Camin   Caracas
09555  Computek                   <i>(</i>970<i>)</i> 224-4822  1635 Blue Spruce Dr. #104                              Fort Collins     CO  80524
01895  Computer Access            <i>(</i>               245 Timsaw Road                                        Montgomery       AL  36117
01818  Computer Accounting Sys    <i>(</i>504<i>)</i> 467-5738  428 Daniel Drive                                       Kenner           LA  70065
01812  Computer Advisory Service                  P.O.Box 186,1 La Martlant                              Bankok
05652  Computer Asset Management  <i>(</i>305<i>)</i> 668-8588  7418 SW 48th Street                                    Miami            FL  33155
01815  Computer Base SDNBHD                       Kompleks Pejabat Damar                                 Jalan Sung,Kual  50480
01828  Computer Business Systems  <i>(</i>301<i>)</i> 770-2292  6211 Executive Blvd.                                   Rockville        MD  20852
01822  Computer Doctor            <i>(</i>305<i>)</i> 370-8551  3591 S.University Dr. #6                               Fort Lauderdale  FL  33328
01825  Computer Enterprises       <i>(</i>               917 Pine Avenue                                        Long Beach       CA  90813
01868  Computer Management Syst.  <i>(</i>813<i>)</i> 626-6558  5602 North 50th Street                                 Tampa            FL  33610
01868  Computer Networks          <i>(</i>817<i>)</i> 877-3888  2501 Parkview Dr., #555                                Fort Worth       TX  76102
01858  Computer Prepared Account  <i>(</i>510<i>)</i> 865-6688  2051 Grand St.             Suite 13                    Alameda          CA  94501
01878  Computer Resources         <i>(</i>216<i>)</i> 362-1878  4858 W. 16th Street                                    Cleveland        OH  44135
01888  Computer Resources, Inc.   <i>(</i>205<i>)</i> 987-1523  384 Cahaba Valley Circle                               Pelham           AL  35124
01885  Computer Sales &amp; Mainten.  <i>(</i>704<i>)</i> 684-3888  44 Buck Shoals, Suite #2   P.O. Box 1818               Arden            NC  28704
05678  Computer Sert              7481835         P.O. Box 1288                                          Meadowbank       NSW 2114
04818  Computer Sports World      <i>(</i>702<i>)</i> 294-0191  1885 Elm St.                                           Boulder City     NV  89005
01895  Computer System Ltd.                       P.O. Box 245                                           Damascus
01928  Computer System Services   <i>(</i>704<i>)</i> 254-1813  P.O. Box 2761                                          Asheville        NC  28802</pre></div>
<div class="page" style="left:455px;top:520px"><pre><u>-----------------------------------------------------------------------------------------------------------------------------------</u>
run date 10/04/2007                                                                                                          Page 6
run time 04:28 PM                                   <b>ALPHABETICAL CUSTOMER LIST</b>
<u>-----------------------------------------------------------------------------------------------------------------------------------</u>

cust#  ----- customer name -----  -- phone no --  -- first address line ---  -- second address line --   ---- city ----   st   zip

01918  Computer Systems For Bus.  <i>(</i>702<i>)</i> 796-6688  1100 East Sahara No. 104                               Las Vegas        NV  89104
01988  Computer Systems Inc.      <i>(</i>402<i>)</i> 330-3600  2819 So. 125 Ave                                       Omaha            NE  68144
01948  Computer Systems Unlimtd   <i>(</i>305<i>)</i> 324-1886  888 S.W. 1st St.                                       Miami            FL  33130
01965  Computerized Office Tools  <i>(</i>318<i>)</i> 227-9812  408 S. Berns                                           Minden           LA  71055
01975  Computers Unlimited, Inc.  <i>(</i>317<i>)</i> 875-8211  7998 Georgetown Rd.,#108                               Indianapolis     IN  46268
08888  Computerware Unlimited     <i>(</i>219<i>)</i> 522-7747  P.O. Box 2588                                          Elkhart          IN  46515
02018  Contact Computing          <i>(</i>415<i>)</i> 967-4215  1300 Isabelle Ave.                                     Mountain View    CA  94040
02015  Control Data Systems                       1 Campbell Street                                      Artarmon NSW     2064
01735  Concentra Worldwide Retail                 52 Grosvenor Gardens                                   London           SW1W0AU
05478  Condominium Connection     <i>(</i>818<i>)</i> 879-3636  31194 La Baya Drive #101                               Westlake Villag  CA  91362
07348  Conell Stationery          <i>(</i>209<i>)</i> 826-2324  858 Sixth Street                                       Los Banos        CA  93635
07148  Connell Stationery         <i>(</i>209<i>)</i> 826-2324  858 6th Street                                         Los Banos        CA  93635
05675  Consolidated Billing Sys   <i>(</i>740<i>)</i> 363-4588  36 N. Franklin                                         Delaware         OH  43015
06758  Consolidated Devics, Inc.  <i>(</i>626<i>)</i> 965-8668  19220 San Jose Ave.                                    Cty of Industry  CA  91748
08888  Consultants Antonio        <i>(</i>819<i>)</i> 378-1866  6215 Corbeil               Trois-Rivieres, Quebec      G8Z 4P8
02198  Consumer&#x27;s Warehouse       <i>(</i>516<i>)</i> 593-3288  717 Broadway Ave.                                      Holbrook         NY  11741
02018  Consumers Power Company    <i>(</i>517<i>)</i> 788-1757  212 West Michigan Avenue                               Jackson          MI  49201
02028  Contemporary Cybernetics   <i>(</i>804<i>)</i> 873-8888  Rock Landing Corp. Center  11846 Rock Landing          Newport News     VA  23606
08888  Contract Services          <i>(</i>801<i>)</i> 484-4482  3222 South Washington                                  Salt Lake City   UT  84115
08958  Cook Urological/VPI        <i>(</i>812<i>)</i> 829-4891  P.O. Box 227                                           Spencer          IN  47460
08658  Cooperative Systems        <i>(</i>479<i>)</i> 855-6238  84 Pembroke Circle                                     Bella Vista      AR  72714
09518  Copywing Ltd               353214892728    Unit 34 Doace Ind Est      South Douglas Road          Cork
08878  Cordex                     4471943687      Europoint                  5/11 Lavington Street       London SE1 0NZ
02048  Corisafe, S.A.             <i>(</i>305<i>)</i> 218-444   Sim 1288                   P.O. Box 025216             Miami            FL  33102
02045  Corporate Color Services   <i>(</i>616<i>)</i> 774-9388  483 Michigan N.E.                                      Grand Rapids     MI  49503
08248  Counter Trade Prod., Inc.  <i>(</i>800<i>)</i> 444-9718  7585 West 66th Ave.                                    Arvada           CO  80003
08868  Craftmasters Inc           <i>(</i>217<i>)</i> 422-7742  1888 N 22nd St.                                        Decatur          IL  62526
02058  Creative Systems Software  <i>(</i>503<i>)</i> 357-5882  P.O. Box 726                                           Forest Grove     OR  97116
02075  Crysalis, Inc.             <i>(</i>805<i>)</i> 543-2795  4275 Santa Fe Rd.                                      San Luis Obispo  CA  93401
02748  Cuadra Associates, Inc.    <i>(</i>310<i>)</i> 478-0066  11835 West Olympic Blvd.   Suite 855                   Los Angeles      CA  90064
05588  Cuadra Associates, Inc.    <i>(</i>202<i>)</i> 463-2107  1211 Connecticut Ave NW    Suite 405                   Washington, DC       20036
02077  Cullinger Water Condition. <i>(</i>               881 Division Street                                    Nashville        TN  37203
08425  Curry&#x27;s Discount           <i>(</i>707<i>)</i> 527-6555  401 Olive Street.                                      Santa Rosa       CA  95407
02088  Custom Computer Systems    <i>(</i>440<i>)</i> 256-5284  9265 Chillicothe Rd.                                   Kirtland         OH  44094
05768  Custom Computer Systems    <i>(</i>909<i>)</i> 982-8282  678 Campton Way                                        Upland           CA  91786
02188  Custom Data Solutions      <i>(</i>313<i>)</i> 752-9671  418 South Main, Suite 204                              Romeo            MI  48065
02185  Custom Enclosures, Inc.    <i>(</i>714<i>)</i> 632-7181  1341 N. Blue Gum Street                                Anaheim          CA  92806
07468  Custom Impressions         <i>(</i>559<i>)</i> 651-8888  8218 Doe Ave.                                          Visalia          CA  93291
07188  Cyro Incorporated          <i>(</i>914<i>)</i> 254-2888  2813 McCarter Hwy                                      Newark           NJ  07104
02158  D.D.S.                     <i>(</i>303<i>)</i> 440-4777  1738 38th                                              Boulder          CO  80301
08878  D.E.M. Allen &amp; Associates  <i>(</i>204<i>)</i> 889-9282  130 Omad Crescent          Winnipeg, Manitoba          R3J 3W1
04568  D.M.S., Inc.               <i>(</i>208<i>)</i> 376-2188  295 N. Orchard                                         Boise            ID  83706
05658  DANA-FARBER CANCER INST.   <i>(</i>617<i>)</i> 632-3842                             P.O. Box 490145             Brookline        MA  02446
02125  DBA Systems                <i>(</i>214<i>)</i> 388-8687  10618 Metric Dr. #142                                  Dallas           TX  75243
02158  DC Systems                 <i>(</i>800<i>)</i> 249-8247  17812 Sierra Hwy, Unit A                               Canyon Country   CA  91351
02182  DCA of Champaign, Inc.     <i>(</i>217<i>)</i> 352-5287  807 Pioneer                                            Champaign        IL  61820
02258  DEFTC, S.A. DE C.V.        7215435         MELERO Y PINA NO. 312      COL. SAN SEBASTIAN          Toluca
07298  ECOMOBILES                 0240182386      15 Rue du Bois Briand      Centre de Gros              NANTES Cedex 3   44801
08468  DL Martin &amp; Dubbers        <i>(</i>218<i>)</i> 847-2188  17835 W. Long Lake Rd                                  Detroit Lakes    MN  56501
02258  DMW Enterprises            <i>(</i>972<i>)</i> 315-7828  214 Oakwood Lane                                       Lewisville       TX  75067
07318  DOUBLEBILL LTD.                            58 Northcroft Road         Englefield Green            Surrey TW20 0DX
02235  DMS Software Systems       <i>(</i>               P.O. Box 6235                                          Altadena         CA  91001</pre></div>
<div class="page" style="left:867px;top:520px"><pre><u>-----------------------------------------------------------------------------------------------------------------------------------</u>
run date 10/04/2007                                                                                                          Page 7
run time 04:28 PM                                   <b>ALPHABETICAL CUSTOMER LIST</b>
<u>-----------------------------------------------------------------------------------------------------------------------------------</u>

cust#  ----- customer name -----  -- phone no --  -- first address line ---  -- second address line --   ---- city ----   st   zip

02248  DSA Medical Services, Inc  <i>(</i>818<i>)</i> 989-2615  14545 Lanark St.                                       Panorama City    CA  91402
05858  DSC                        <i>(</i>206<i>)</i> 575-1888  P.O. Box 58818             6718 S. 188TH Street        Seattle          WA  98138
02258  DSR Systems                <i>(</i>714<i>)</i> 792-4855  728 Idylwilde                                          Redlands         CA  92374
02518  Dahlstrand Software        <i>(</i>707<i>)</i> 795-9737  7 Greenleaf Lane                                       Cotati           CA  94931
02278  Dalcon International, Inc  <i>(</i>               RETURN TO SENDER           2222-16th Ave. South #118   Nashville        TN  37212
02275  Dallas Fomenting           <i>(</i>817<i>)</i> 481-5538  1818 E. Dallas Road                                    Grapevine        TX  76051
05978  Dan Jackman                <i>(</i>805<i>)</i> 987-8852  671 Via Alondra, Ste #818                              Camarillo        CA  93010
02278  Daniel K. Joynton, Inc.    <i>(</i>719<i>)</i> 528-1282  1271 Wescol Drive                                      Colorado Spring  CO  80907
08478  Dante Rosa Jr.             <i>(</i>405<i>)</i> 947-5557  P.O. Box 55858                                         Tulsa            OK  74155
02188  Dark Star Information S.                   12 St. Peter&#x27;s Court                                   Colchester       CO1 1WD
02185  Dataease Technologies      <i>(</i>216<i>)</i> 237-2538  P.O. Box 33878                                         North Royalton   OH  44133
02288  Data Connection Engineer   <i>(</i>615<i>)</i> 573-5583  605 Sevier Ave.            <i>(</i>RETURN TO SENDER<i>)</i>          Knoxville        TN  37920
07825  Data Driver Products       <i>(</i>               Gary F. Looney             501 West Powell Lane #502   Austin           TX  78753
08868  Data Ltd, Inc.             <i>(</i>800<i>)</i> 526-1288  703 Data Ltd. Parkway      P.O. Box 761                La Porte         IN  46352
02318  Data Management Techniq.   <i>(</i>               20202 178TH Ave. NE                                    Woodinville      WA  98072
02328  Data Partners              <i>(</i>316<i>)</i> 687-4547  9812 Blucher                                           Wichita          KS  67207
02248  Data Pulse Inc.            <i>(</i>303<i>)</i> 329-6444  1618 S. Emerson                                        Denver           CO  80210
02245  Data Securities Internat.  <i>(</i>619<i>)</i> 457-5199  6165 Greenwich Dr. #220                                San Diego        CA  92122
04488  Data Solutions &amp; Consult.  <i>(</i>318<i>)</i> 798-5252  13278 Hwy 8                                            Colfax           LA  71417
02258  Data Technology Products   <i>(</i>619<i>)</i> 272-6688  P.O. Box 9497                                          San Diego        CA  92117
02255  Data Technology/Telecomm.  <i>(</i>714<i>)</i> 638-7868  P.O. Box 9497                                          Costa Mesa       CA  92628
08388  Datamec Technology         <i>(</i>409<i>)</i> 560-1284  1112 NW Stallings Dr.                                  Nacogdoches      TX  75961
07788  Database Marketing Sol.    <i>(</i>716<i>)</i> 877-7388  241 Clark St.                                          Buffalo          NY  14223
02185  Datacon Management         <i>(</i>707<i>)</i> 546-8372  P. O. Box 1765                                         Santa Rosa       CA  95403
02285  Dataline                   <i>(</i>913<i>)</i> 829-8788  1235 East Santa Fe                                     Olathe           KS  66061
02258  Datatron Ltd.              <i>(</i>515<i>)</i> 987-2882  1125 SE Westbrooke         Suite 4                     Waukee           IA  50263
02268  Datatron Systems Corp.     <i>(</i>515<i>)</i> 222-9288  10253 Aurora Avenue                                    Des Moines       IA  50322
02265  Datatronics DE SURE!!!!    <i>(</i>402<i>)</i> 330-7345  13325 B Street                                         Omaha            NE  68144
02288  Dave Jackson               <i>(</i>502<i>)</i> 684-3887  457 Rollins Road                                       Wickenburg       AZ  85358
02287  David Abell Fine Pianos    <i>(</i>213<i>)</i> 651-3060  8162 Beverly Blvd.                                     Los Angeles      CA  90048
07718  David B. Lausee, CPA       <i>(</i>425<i>)</i> 487-6427  18118 NE 177th                                         Woodinville      WA  98072
02788  David Weingast             <i>(</i>310<i>)</i> 457-1844
05485  Dawn Goode                 <i>(</i>301<i>)</i> 884-8867  26266 Sandy Court                                      Mechanicsville   MD  20659
08158  Dawn Sedenck               <i>(</i>540<i>)</i> 786-6816  6808 Baldwin Court                                     Fredericksburg   VA  22407
02298  Dayton Computer Services   <i>(</i>412<i>)</i> 458-7888  116 S. Center Street                                   Grove City       PA  16127
02388  De Cordoba, Pedro          <i>(</i>213<i>)</i> 459-2578  1868 Vista Grande                                      Pacific Palisad  CA  90272
05388  Dean Center Computing      01494565781     4 Winchfield Road          Hughenden Valley            High Wycombe     ENGLAND
02328  Dean Humes                 <i>(</i>213<i>)</i> 550-6888  9229 Sunset Blvd. #214                                 Beverly Hills    CA
08158  Debra Sedenick             <i>(</i>               23719 Falcon Crest                                     Valencia         CA  91354
02335  Decision Systems Software  <i>(</i>708<i>)</i> 699-9648  4154 Cove Lane                                         Glenview         IL  60025
08888  Dedicated Dental Systems   <i>(</i>805<i>)</i> 397-5513  3888 Ming Ave.                                         Bakersfield      CA  93309
02385  Delcon, Inc.               <i>(</i>307<i>)</i> 733-2248  125 Scott Lane                                         Jackson          WY  83001
08138  Delton Cabinets<i>(</i>SEE PLUS<i>)</i>  <i>(</i>780<i>)</i> 413-2268  14135-128 Avenue           Edmonton, Alberta T5L 3H3
02318  Dennis Benton              <i>(</i>               121 12th Street S.                                     Hudson           WI  54016
02315  Dennis, Mayer &amp; Leach      <i>(</i>818<i>)</i> 592-2858  P.O. Box 11118                                         Canoga Park      CA  91309
05818  Dental-Net <i>(</i>USE NEW#8478<i>)</i>  <i>(</i>520<i>)</i> 696-4388  4729 N. Oracle Rd. #100                                Tucson           AZ  85705
07888  Dermas Technologies        <i>(</i>212<i>)</i> 393-1111  116 John Street, 21st                                  New York         NY  10038
05228  Desert Codeworks           <i>(</i>505<i>)</i> 420-4682  2505 N. Cambridge Ave.                                 Roswell          NM  88201
02345  Desert Computer Services   <i>(</i>505<i>)</i> 625-2327  608 East Tierra Berrenda                               Roswell          NM  88201
02344  Detroit Macomb Company     <i>(</i>313<i>)</i> 531-9288  12865 Telegraph Road                                   Detroit          MI  48239
02342  Detrex-Winer Corporation   <i>(</i>312<i>)</i> 397-4878  2233 N. Palmer Dr.                                     Schaumburg       IL  60195
05755  Digi-Com Systems, Inc. of  <i>(</i>954<i>)</i> 345-8191  South Florida              4350 NW 99th Avenue         Coral Springs    FL  33065</pre></div>
<div class="page" style="left:1279px;top:520px"><pre><u>-----------------------------------------------------------------------------------------------------------------------------------</u>
run date 10/04/2007                                                                                                          Page 8
run time 04:28 PM                                   <b>ALPHABETICAL CUSTOMER LIST</b>
<u>-----------------------------------------------------------------------------------------------------------------------------------</u>

cust#  ----- customer name -----  -- phone no --  -- first address line ---  -- second address line --   ---- city ----   st   zip

02345  Digidata Computer Systems  <i>(</i>415<i>)</i> 763-5582  1875 Clarendon Crescent                                Oakland          CA  94610
02428  Digital Business Systems   <i>(</i>702<i>)</i> 368-2222  3655 W. Desert Inn Rd. #8                              Las Vegas        NV  89102
02468  Digital Innovations, Inc.  <i>(</i>               1329-4 Lincoln Avenue                                  Holbrook         NY  11741
02445  Digital Perspectives Corp  <i>(</i>219<i>)</i> 484-8578  2222 California Ave.                                   Fort Wayne       IN  46805
02458  Digital Solutions, Inc.    <i>(</i>520<i>)</i> 747-2277  440 So. Willmar Blvd #106                              Tucson           AZ  85711
02455  Digitech Corporation       <i>(</i>               6484 Simpson Road, #1238                               Rockford         IL  61102
02465  Digitronix                 <i>(</i>402<i>)</i> 339-5340  9885 F Street                                          Omaha            NE  68127
08858  Diocese of Baton Rouge     <i>(</i>225<i>)</i> 242-0177  P.O. Box 2028                                          Baton Rouge      LA  70821
02456  Discount Video Rental      <i>(</i>408<i>)</i> 447-1878  1552 Halford Avenue                                    Santa Clara      CA  95051
07688  Discount Warehouse         <i>(</i>714<i>)</i> 633-1878  1878 N. Batavia St Unit B                              Orange           CA  92867
02457  Diskel Ltd.                                226-228 Farnham Road                                   Slough           SL1 4XE
02468  Disposable Waste Systems   <i>(</i>714<i>)</i> 751-8188  2588 S. Garnsey                                        Santa Ana        CA  92707
02465  Distributed Management S.  <i>(</i>               P.O. Box 1441                                          Pleasanton       CA  94566
08888  Diversified Data Solution  <i>(</i>               14853 Park Ridge Drive                                 Lowell           AR  72745
02465  Doble X, Inc.              <i>(</i>407<i>)</i> 844-0888  312 South Wind Dr. #204                                N. Palm Beach    FL  33408
02467  Doctors Computer System    <i>(</i>               559 Fairway Drive, #112                                Deerfield Beach  FL  33441
02468  Doctors Foot Care Center   <i>(</i>818<i>)</i> 368-2841  16515 Balboa, Suite 300                                Granada Hills    CA  91344
02478  Dodds Engineering          <i>(</i>503<i>)</i> 472-8885  1814 N. Highway 99 W                                   McMinnville      OR  97128
02475  Dodson Engineered Prod.    <i>(</i>303<i>)</i> 945-2233  8888 Marand Road, Box 248                              Glenwood Spring  CO  81602
02478  Don Robertson              <i>(</i>714<i>)</i> 738-6484  2555 E. Chapman Ave. #205                              Fullerton        CA  92631
02488  Donnington Computer Serv.                  Donnington Hall                                        Ledbury
02485  Dorsey Evans               <i>(</i>202<i>)</i> 393-4888  Attorney At Law            1301 Pennsylvania Ave N.W   Washington       DC  20004
09822  Doug S. Sands              <i>(</i>561<i>)</i> 487-9828  18872 Villa Medici                                     Boca Raton       FL  33434
02484  Dovario Systems, Inc       <i>(</i>503<i>)</i> 771-8885  6555 SE 82nd                                           Portland         OR  97266
02485  Dr. Arthur Noting          <i>(</i>310<i>)</i> 374-5466  2447 Pacific Coast Hwy     Suite 211                   Hermosa Beach    CA  90254
02588  Dr. Burgueno               <i>(</i>818<i>)</i> 573-2888  7516 Garvey Avenue                                     Rosemead         CA  91770
07818  Dr. Craig Davis            <i>(</i>707<i>)</i> 585-2588  5288 Snyder Lane                                       Rohnert Park     CA  94928
08448  Dr. Duncan Foulds, DDS     <i>(</i>281<i>)</i> 265-6265  4655 Sweetwater Blvd #500                              Sugar Land       TX  77479
08258  Dr. English                <i>(</i>505<i>)</i> 622-2671  313 W. County Club Road                                Roswell          NM  88201
07978  Dr. Gary Cage              <i>(</i>970<i>)</i> 949-9766  PO Box 4465                                            Avon             CO  81620
02595  Dr. Goldman                <i>(</i>818<i>)</i> 782-9588  14640 Victory Blvd. #33                                Van Nuys         CA  91411
08418  Dr. Imelda Miranda         <i>(</i>301<i>)</i> 952-8481  7511 S Osborne Rd Ste 106                              Upper Marlboro   MD  20772
08188  Dr. Matsuyama              <i>(</i>               6401 Coyle Ave #111                                    Carmichael       CA  95608
05558  Dr. P. Chee <i>(</i>SEE #5848<i>)</i>    <i>(</i>808<i>)</i> 521-6578  58 S. Beretania            Suite #C116                 Honolulu         HI  96813
07778  Dr. Stephen Schwartz       <i>(</i>718<i>)</i> 823-3788  1732 Astor Ave.                                        Bronx            NY  10469
05848  Dr. Syd Spiesel            <i>(</i>203<i>)</i> 397-5211  8 Lunar Drive                                          Woodbridge       CT  06525
02518  Dr. Trinh                  <i>(</i>714<i>)</i> 534-8282  12382 Garden Grove Bl. #1                              Garden Grove     CA  92643
08278  Dr. William Brown          <i>(</i>410<i>)</i> 768-7878  1728 South Crain Hwy #101                              Glen Burnie      MD  21061
02485  Drake Business Software    <i>(</i>               1606 W. Willow View Road                               Urbana           IL  61801
07868  Drs. Waskman &amp; Schmitt     <i>(</i>517<i>)</i> 592-8422  PO Box 657                                             Brooklyn         MI  49230
02488  Drummond Informatique      <i>(</i>               412 Heriot, Local 102                                  Drummondvl       J2B 1B5
09888  Dura-Line                  <i>(</i>606<i>)</i> 248-6435  P.O. Box 1445                                          Middlesboro      KY  40965
02528  Dustin Nelson DDS          <i>(</i>               151 S. El Molino #201                                  Pasadena         CA  91101
02557  Dynamic Solutions, Inc.    <i>(</i>               58 Lytton Avenue                                       Hartsdale        NY  10530
02558  Dynatech Computer Systems  <i>(</i>415<i>)</i> 964-7488  280 Bernardo Avenue                                    Mountain View    CA  94039
02562  E &amp; E Display Group        <i>(</i>785<i>)</i> 843-8248  910 E. 29TH Street                                     Lawrence         KS  66046
09688  E &amp; H Business Services    <i>(</i>409<i>)</i> 275-1788  P.O. Box 624                                           San Augustine    TX  75972
02568  E &amp; S Int&#x27;l Enterprises    <i>(</i>818<i>)</i> 887-8788  7848 Canoga Avenue                                     Canoga Park      CA  91309
07758  E-Integrators              <i>(</i>888<i>)</i> 424-3475  3828 North Military Trail                              Boca Raton       FL  33431
02565  E.D.P. Ltd.                                10-16 Seaton Pl.St.Helier                              Jersey, Ch. Isls
02578  E.S. Computing, Ltd.       <i>(</i>519<i>)</i> 371-9795  868 3rd Ave. East                                      Owen Sound       N4K 2K5
02588  E.W.C. Enterprises         <i>(</i>208<i>)</i> 322-0334  P.O. Box 4269                                          Boise            ID  83711</pre></div>
<div id="title">
<svg style="position:absolute;left:2px;top:4px" width="16" height="16" viewBox="0 0 16 16"><rect x="0" y="0" width="16" height="16" fill="#ece9d8"/><path d="M0.500 15.500V0.500H15.500" stroke="#fffef0" fill="none"/><path d="M15.500 0.500V15.500H0.500" stroke="#a08a58" fill="none"/><rect x="3.500" y="3.500" width="5" height="6" fill="#fff" stroke="#4a4a4a" stroke-width="1"/><path d="M8.300 5.600h3.700l-0.500 2.200h-4.200z" fill="#bdbdbd" stroke="#555" stroke-width="0.700"/><path d="M6.500 8.200h6l1.400 1.700v1.300l-1.400 1.700h-5.500l-1.600 -1.500v-1.500z" fill="#747474" stroke="#333" stroke-width="0.900"/><rect x="6.300" y="9.900" width="6.300" height="1.200" fill="#d4d4d4"/><rect x="9" y="10" width="1.700" height="1" fill="#e2d800"/></svg>
<span class="ttl">cuslnc-1.apf (11 pages)</span>
<div class="tbtn" style="left:1611px"><svg width="21" height="21"><rect x="5" y="13" width="7" height="3" fill="#fff"/></svg></div>
<div class="tbtn" style="left:1634px"><svg width="21" height="21"><path d="M8.5 7.5v-2h7v6h-2" fill="none" stroke="#fff" stroke-width="1.6"/><rect x="5.5" y="9.5" width="6" height="6" fill="none" stroke="#fff" stroke-width="1.6"/><rect x="5" y="9" width="7" height="2" fill="#fff"/></svg></div>
<div class="tbtn cls" style="left:1657px"><svg width="21" height="21"><path d="M5.5 5.5l10 10M15.5 5.5l-10 10" stroke="#fff" stroke-width="2.4"/></svg></div>
</div>
<div id="tb"></div>
<div id="combo"><div class="dd"><svg width="15" height="15" style="position:absolute;left:-1px;top:-1px"><path d="M3.2 5.6L7.5 10L11.8 5.6" fill="none" stroke="#4d6185" stroke-width="2.1"/></svg></div></div>
<div class="xb" style="left:73px;top:32px;width:25px;height:24px"><svg width="25" height="24" style="left:-1px;top:-1px"><rect x="3.8" y="6" width="6.2" height="2" fill="#000"/><rect x="6" y="4" width="2" height="6" fill="#000"/><circle cx="12.9" cy="11.7" r="3.5" fill="#fff" stroke="#000" stroke-width="1.1"/><path d="M15.5 14.3L19.9 18.6" stroke="#000" stroke-width="1.4"/></svg></div>
<div class="xb dis" style="left:100px;top:32px;width:25px;height:24px"><svg width="25" height="24" style="left:-1px;top:-1px"><rect x="3.8" y="6.2" width="6" height="1.7" fill="#aca899"/><circle cx="12.9" cy="11.9" r="4" fill="#aca899"/><path d="M15 14L19.6 18.4" stroke="#aca899" stroke-width="2.2"/></svg></div>
<div class="xb" style="left:133px;top:32px;width:25px;height:24px"><svg width="25" height="24" style="left:-1px;top:-1px"><rect x="7" y="6" width="11" height="14" fill="#000"/><rect x="6.5" y="5.5" width="10" height="13" fill="#fff" stroke="#000" stroke-width="1"/></svg></div>
<div class="flat" style="left:165px;top:31px;width:47px;height:26px"><div style="position:absolute;left:28px;top:0;width:1px;height:24px;background:#fff;box-shadow:1px 0 0 #d6d2c2"></div>
<svg width="47" height="26" style="position:absolute;left:-1px;top:-1px"><g fill="#000"><rect x="10" y="6" width="6" height="7"/><rect x="18" y="6" width="6" height="7"/><rect x="10" y="14" width="6" height="7"/><rect x="18" y="14" width="6" height="7"/></g><g fill="#fff" stroke="#000" stroke-width="1"><rect x="9.5" y="5.5" width="5" height="6"/><rect x="17.5" y="5.5" width="5" height="6"/><rect x="9.5" y="13.5" width="5" height="6"/><rect x="17.5" y="13.5" width="5" height="6"/></g><path d="M35 11h5.4l-2.7 3z" fill="#000"/></svg></div>
<div id="pgno">1</div>
<div class="xb dis" style="left:285px;top:35px;width:16px;height:18px"><svg width="16" height="18" style="left:-1px;top:-1px"><path d="M10 5v8l-4.5-4z" fill="#aca899"/></svg></div>
<div class="xb" style="left:303px;top:35px;width:16px;height:18px"><svg width="16" height="18" style="left:-1px;top:-1px"><path d="M6 5v8l4.5-4z" fill="#808080"/></svg></div>
<div class="xb" style="left:354px;top:32px;width:25px;height:24px"><svg width="25" height="24" style="left:-1px;top:-1px"><g stroke="#000" stroke-width="1" fill="#c8c8c8"><path d="M11.5 5.5h7v6h-3z" fill="#fff"/><path d="M9.500 8.500h6l3.5 3v2l-4 3h-6z"/><path d="M8.500 7.500h7v6h-7z" fill="#fff"/><path d="M7.500 10.500h6l3.500 2.500v2l-3 3h-6.500z"/><path d="M6.500 9.500h6.500v5.500h-6.500z" fill="#fff"/><rect x="8.500" y="11.500" width="3" height="2" fill="#000"/><path d="M5.500 14.500h9l3.500 -2.500v3l-3.500 4h-9.500l-1 -1v-2z"/><path d="M4.500 16h10"/></g><rect x="10" y="17" width="3" height="1.200" fill="#f00"/></svg></div>
<div class="xb" style="left:381px;top:32px;width:25px;height:24px"><svg width="25" height="24" style="left:-1px;top:-1px"><g stroke="#000" stroke-width="1" fill="#cfcfcf"><path d="M8.500 5.500h8l-1.500 4.500h-8.500z" fill="#fff"/><path d="M9.500 7.500h5M9 9h5" stroke-width="0.800"/><path d="M6.500 10.500h9.500l3.500 -2l1 1v5.500l-3.500 4h-11.500l-1 -1v-5.500z"/><path d="M4.500 13h12.500l3 -3M4.500 16.500h12.500l3 -3M17 13v6" fill="none"/></g><rect x="11" y="14" width="3" height="1.300" fill="#ff0"/></svg></div>
<div class="xb" style="left:414px;top:32px;width:25px;height:24px"><svg width="25" height="24" style="left:-1px;top:-1px"><text x="12.6" y="18.3" text-anchor="middle" font-family="Liberation Sans,sans-serif" font-weight="bold" font-size="16.5" fill="#ffff00" stroke="#000" stroke-width="1.7" paint-order="stroke" stroke-linejoin="round">?</text></svg></div>
<div class="xb" style="left:447px;top:32px;width:58px;height:24px"><svg width="58" height="24" style="left:-1px;top:-1px"><rect x="8.500" y="4.500" width="9" height="14" fill="#fff" stroke="#000" stroke-width="1.200"/><path d="M14.500 9.500a2.500 2.500 0 1 0 0 4" fill="none" stroke="#000" stroke-width="1.100"/><path d="M11 8.200l11.500 10.800M21.500 8.200l-10.500 10.800" stroke="#f00" stroke-width="2"/></svg><span class="cl">Close</span></div>

<div class="cb" style="left:531px"><svg width="26" height="26" style="left:-1px;top:-1px"><rect x="6.500" y="5.500" width="8" height="11" fill="#fff" stroke="#222" stroke-width="1"/><g stroke="#000" stroke-width="1" fill="#bdbdbd"><path d="M12.500 9.500h7l-1 3h-7.500z" fill="#fff"/><path d="M13 11.200h4" stroke-width="1.200"/><path d="M10.500 12.500h8.500l2.500 -1.500l1 1v4l-2.500 3.500h-9.500l-1 -1v-4z" fill="#9a9a9a"/><path d="M9.500 15.200h10.500l2 -2.500" fill="none"/><path d="M10 18.500h10" stroke-width="1.400"/></g><rect x="15" y="16.300" width="3" height="1.200" fill="#f4ea00"/></svg></div>
<div class="cb" style="left:562px"><svg width="26" height="26" style="left:-1px;top:-1px"><defs><linearGradient id="bg1" x1="0" y1="0" x2="1" y2="1"><stop offset="0" stop-color="#555"/><stop offset="0.45" stop-color="#f4f4f4"/><stop offset="1" stop-color="#7a7a7a"/></linearGradient><radialGradient id="lg" cx="0.4" cy="0.35" r="0.7"><stop offset="0" stop-color="#e2f3ff"/><stop offset="1" stop-color="#8cc6fb"/></radialGradient></defs><path d="M9.500 4.300q4 -1.600 8 1l4.500 3l-3.500 5.500l-4 -3z" fill="#7d7d7d" stroke="#2e2e2e" stroke-width="0.900"/><path d="M3.200 6.800q2.500 -2.500 6.500 -2.300l5.300 4.500l-4.500 6.500z" fill="url(#bg1)" stroke="#2e2e2e" stroke-width="0.900"/><path d="M9 3.800q3.500 -1.200 7 0.400" stroke="#222" stroke-width="1.300" fill="none"/><ellipse cx="12.300" cy="12.400" rx="2.500" ry="3.200" fill="url(#lg)" stroke="#2b2b2b" stroke-width="0.900"/><ellipse cx="20" cy="11.200" rx="2.300" ry="3" fill="url(#lg)" stroke="#2b2b2b" stroke-width="0.900"/><text x="3" y="22.700" font-family="Liberation Serif,serif" font-style="italic" font-weight="bold" font-size="10" fill="#1222a8" textLength="20" lengthAdjust="spacingAndGlyphs">ABC</text></svg></div>
<div class="cb" style="left:593px"><svg width="26" height="26" style="left:-1px;top:-1px"><defs><linearGradient id="fg" x1="0" y1="0" x2="0" y2="1"><stop offset="0" stop-color="#ffffb0"/><stop offset="0.5" stop-color="#ffef70"/><stop offset="1" stop-color="#ffdc28"/></linearGradient></defs><path d="M7.500 6.500h8.700l1 -2h5.300v13l-15 4z" fill="#fffbd2" stroke="#d9a520" stroke-width="1"/><path d="M3.500 9.500h4v12z" fill="#ffeb80" stroke="#d9a520" stroke-width="1"/><path d="M8 7.800h9.600l4 9.400l-13.600 4z" fill="url(#fg)"/><path d="M7.500 21.500l14.200 -4.100" stroke="#dba818" stroke-width="1" fill="none"/></svg></div>
<div class="cb" style="left:624px"><svg width="26" height="26" style="left:-1px;top:-1px"><defs><linearGradient id="wg" x1="0" y1="0" x2="1" y2="1"><stop offset="0" stop-color="#ffffff"/><stop offset="1" stop-color="#cfd0f8"/></linearGradient></defs><rect x="3.500" y="4.500" width="20" height="18" rx="1.500" fill="url(#wg)" stroke="#1e90ff" stroke-width="1.400"/><rect x="4" y="5" width="19" height="2.800" fill="#2a8cf0"/><rect x="13" y="15.800" width="8.500" height="7" fill="#fff" stroke="#6a6a6a" stroke-width="1.200"/><path d="M13 14.800l4.200 6l6.300 -10.500" fill="none" stroke="#1048b8" stroke-width="2.300"/></svg></div>
<div class="cb" style="left:655px"><svg width="26" height="26" style="left:-1px;top:-1px"><defs><linearGradient id="dg" x1="0" y1="0" x2="1" y2="1"><stop offset="0" stop-color="#ffffff"/><stop offset="1" stop-color="#c8d4f0"/></linearGradient><linearGradient id="ag" x1="0" y1="0" x2="0" y2="1"><stop offset="0" stop-color="#a8f070"/><stop offset="1" stop-color="#28a818"/></linearGradient></defs><path d="M5.500 3.500h11l4.500 4.500v15h-15.500z" fill="url(#dg)" stroke="#5a6ea8" stroke-width="1"/><path d="M16.500 3.500v4.500h4.500" fill="#dfe6fa" stroke="#7a8cc0" stroke-width="0.800"/><rect x="7.500" y="9.500" width="6" height="1.800" fill="#b8c0dc"/><rect x="7.500" y="13" width="8" height="7" fill="#b4bfe0"/><path d="M13.500 10.500h5v-2.700l5.200 5.700l-5.200 5.700v-2.700h-5z" fill="url(#ag)" stroke="#1f9a18" stroke-width="0.900"/></svg></div>
<div class="cb" style="left:686px"><svg width="26" height="26" style="left:-1px;top:-1px"><path d="M5.500 3.800l15 0.700l0.500 17.500l-15 1.200z" fill="#efe9e2" stroke="#2080d8" stroke-width="1.600"/><rect x="9" y="9" width="5.500" height="4" fill="#fff" stroke="#c0c0c0" stroke-width="0.700"/><rect x="9" y="16" width="5.500" height="4" fill="#fff" stroke="#c0c0c0" stroke-width="0.700"/><path d="M9.500 8.500l2.800 3.200l4.700 -6.700" fill="none" stroke="#d82818" stroke-width="1.700"/><path d="M9.500 16l2.800 3.200l4.700 -6.700" fill="none" stroke="#d82818" stroke-width="1.700"/></svg></div>

<div id="pop"><div class="hd">Pages</div><table><colgroup><col style="width:29px"><col style="width:29px"><col style="width:29px"><col style="width:29px"><col style="width:35px"><col style="width:34px"></colgroup>
<tr><td>1x2</td><td>1x4</td><td>1x6</td><td>1x8</td><td>1x10</td><td>1x12</td></tr>
<tr><td>2x2</td><td class="hi">2x4</td><td>2x6</td><td>2x8</td><td>2x10</td><td>2x12</td></tr>
<tr><td>3x2</td><td>3x4</td><td>3x6</td><td>3x8</td><td>3x10</td><td>3x12</td></tr>
<tr><td>4x2</td><td>4x4</td><td>4x6</td><td>4x8</td><td>4x10</td><td>4x12</td></tr>
<tr><td>5x2</td><td>5x4</td><td>5x6</td><td>5x8</td><td>5x10</td><td>5x12</td></tr>
<tr><td>6x2</td><td>6x4</td><td>6x6</td><td>6x8</td><td>6x10</td><td>6x12</td></tr>
</table></div>
<div id="vs"><div class="sb" style="left:2px;top:1px"><svg width="13" height="14" style="position:absolute;left:-1px;top:-1px"><path d="M3 9L6.500 5.500L10 9" fill="none" stroke="#4d6185" stroke-width="2"/></svg></div>
<div class="sb" style="left:2px;top:18px;height:7px"></div>
<div class="sb" style="left:2px;top:891px"><svg width="13" height="14" style="position:absolute;left:-1px;top:-1px"><path d="M3 5.500L6.500 9L10 5.500" fill="none" stroke="#4d6185" stroke-width="2"/></svg></div></div>
<div id="hs"><div class="sbd" style="left:1px;top:2px"><svg width="14" height="13" style="position:absolute;left:-1px;top:-1px"><path d="M9 3L5 6.500L9 10" fill="none" stroke="#c9c7ba" stroke-width="2"/></svg></div>
<div class="sbd" style="left:1647px;top:2px"><svg width="14" height="13" style="position:absolute;left:-1px;top:-1px"><path d="M5.500 3L9.500 6.500L5.500 10" fill="none" stroke="#c9c7ba" stroke-width="2"/></svg></div></div>
<div id="corner"></div>
<div id="bot"></div>
</div>
<div id="edge"><div style="top:0;height:26px;background:linear-gradient(to bottom,#6f86dc,#8fa0e6 30%,#7d90de 70%,#6a7fd2)"></div><div style="top:26px;height:22px;background:#f4f4fb"></div><div style="top:48px;height:1px;background:#c9c3ae"></div><div style="top:101px;height:27px;background:#aca899"></div><div style="top:132px;height:1px;background:#7f9db9"></div><div style="top:133px;height:13px;background:#ece9d8;border-left:1px solid #7f9db9"></div><div style="top:146px;height:844px;border-left:1px solid #a9a694;left:0"></div></div>
</body></html>
